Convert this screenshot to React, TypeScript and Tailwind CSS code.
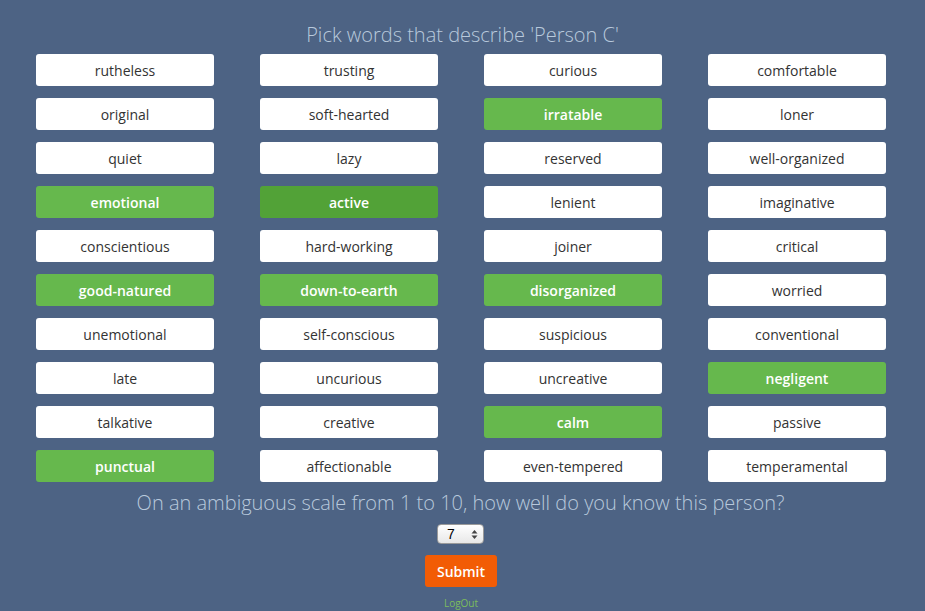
import React from 'react';

const words: { label: string; on?: 'light' | 'dark' }[] = [
  { label: 'rutheless' }, { label: 'trusting' }, { label: 'curious' }, { label: 'comfortable' },
  { label: 'original' }, { label: 'soft-hearted' }, { label: 'irratable', on: 'light' }, { label: 'loner' },
  { label: 'quiet' }, { label: 'lazy' }, { label: 'reserved' }, { label: 'well-organized' },
  { label: 'emotional', on: 'light' }, { label: 'active', on: 'dark' }, { label: 'lenient' }, { label: 'imaginative' },
  { label: 'conscientious' }, { label: 'hard-working' }, { label: 'joiner' }, { label: 'critical' },
  { label: 'good-natured', on: 'light' }, { label: 'down-to-earth', on: 'light' }, { label: 'disorganized', on: 'light' }, { label: 'worried' },
  { label: 'unemotional' }, { label: 'self-conscious' }, { label: 'suspicious' }, { label: 'conventional' },
  { label: 'late' }, { label: 'uncurious' }, { label: 'uncreative' }, { label: 'negligent', on: 'light' },
  { label: 'talkative' }, { label: 'creative' }, { label: 'calm', on: 'light' }, { label: 'passive' },
  { label: 'punctual', on: 'light' }, { label: 'affectionable' }, { label: 'even-tempered' }, { label: 'temperamental' },
];

const WordButton: React.FC<{ label: string; on?: 'light' | 'dark' }> = ({ label, on }) => {
  const tone =
    on === 'light'
      ? 'bg-[#66b84d] text-white font-semibold'
      : on === 'dark'
      ? 'bg-[#52a237] text-white font-semibold'
      : 'bg-white text-[#333333]';
  return (
    <div className={`h-8 rounded-[3px] flex items-center justify-center text-[14px] ${tone}`}>
      {label}
    </div>
  );
};

export default function App() {
  return (
    <div className="w-[925px] h-[611px] bg-[#4d6384] overflow-hidden font-['Open_Sans',sans-serif]">
      <h1 className="pt-[22px] text-center text-[20px] font-light leading-[26px] text-[#b8c9dc]">
        Pick words that describe 'Person C'
      </h1>
      <div className="mt-[6px] pl-9 grid grid-cols-[repeat(4,178px)] gap-x-[46px] gap-y-3">
        {words.map((w) => (
          <WordButton key={w.label} label={w.label} on={w.on} />
        ))}
      </div>
      <p className="mt-[8px] pr-[4px] text-center text-[20px] font-light leading-[26px] text-[#b8c9dc]">
        On an ambiguous scale from 1 to 10, how well do you know this person?
      </p>
      <div className="mt-[8px] pr-[4px] flex justify-center">
        <div className="w-[47px] h-[20px] rounded-[4px] bg-gradient-to-b from-white to-[#e8e8e8] border border-[#9a9a9a] flex items-center pl-[9px] pr-[5px] font-['Liberation_Sans',sans-serif] text-[14px] text-black">
          <span className="flex-1">7</span>
          <svg width="7" height="11" viewBox="0 0 7 11">
            <path d="M3.5 1 L6.5 4.5 L0.5 4.5 Z" fill="#444" />
            <path d="M3.5 10 L6.5 6.5 L0.5 6.5 Z" fill="#444" />
          </svg>
        </div>
      </div>
      <div className="mt-[11px] pr-[3px] flex justify-center">
        <button className="w-[72px] h-8 rounded-[3px] bg-[#f25c05] text-white text-[14px] font-semibold">
          Submit
        </button>
      </div>
      <div className="mt-[10px] pr-[3px] text-center text-[10px] leading-[12px] text-[#7cbd5c]">LogOut</div>
    </div>
  );
}
